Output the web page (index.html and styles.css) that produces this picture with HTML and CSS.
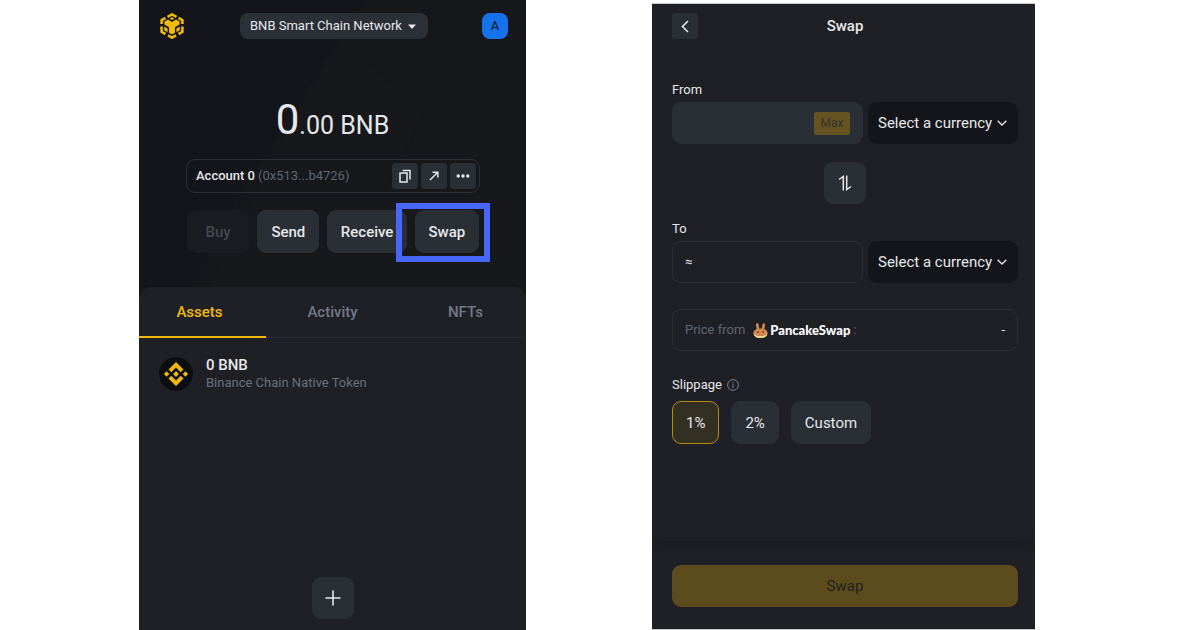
FILE: index.html
```html
<!DOCTYPE html>
<html lang="en">
<head>
    <meta charset="UTF-8">
    <meta name="viewport" content="width=device-width, initial-scale=1.0">
    <title>Wallet - Swap</title>
    <link rel="stylesheet" href="styles.css">
</head>
<body>
    <section class="panel wallet">
        <svg class="facets" viewBox="0 0 387 300" preserveAspectRatio="none" aria-hidden="true">
            <path d="M225 0 L387 0 L387 300 L45 300 L108 180 L200 40 Z" fill="#16171b"/>
            <path d="M200 40 L285 112 L245 190 L190 300 L62 300 L155 118 Z" fill="#17181c"/>
            <path d="M288 112 L387 112 L387 300 L190 300 Z" fill="#17181c"/>
        </svg>

        <header class="wallet-header">
            <svg class="logo" viewBox="0 0 24 26" aria-label="BNB Chain" role="img">
                <g fill="none" stroke="#f0b90b" stroke-width="2.6">
                    <path d="M7.5 3.8 L12 1.4 L16.5 3.8"/>
                    <path d="M18.6 5 L22.4 7.2 V11"/>
                    <path d="M22.4 13.6 V18.8 L18.6 21"/>
                    <path d="M16 22.4 L12 24.7 L8 22.4"/>
                    <path d="M5.4 21 L1.6 18.8 V13.6"/>
                    <path d="M1.6 11 V7.2 L5.4 5"/>
                </g>
                <g fill="#f0b90b">
                    <path d="M4.4 8.4 L8 6.5 L12 8.9 L16 6.5 L19.6 8.4 V11.4 L15 14.2 V19.8 L12 21.5 L9 19.8 V14.2 L4.4 11.4 Z"/>
                    <path d="M12 4.2 L14.4 5.6 L12 7 L9.6 5.6 Z"/>
                    <path d="M4.2 13.4 L7.6 15.4 V19.2 L4.2 17.2 Z"/>
                    <path d="M19.8 13.4 L16.4 15.4 V19.2 L19.8 17.2 Z"/>
                </g>
            </svg>
            <button class="network" type="button">
                BNB Smart Chain Network
                <svg width="8" height="5" viewBox="0 0 8 5" aria-hidden="true"><path d="M0 0.5 H8 L4 5 Z" fill="#e6e8ea"/></svg>
            </button>
            <button class="avatar" type="button">A</button>
        </header>

        <div class="balance"><span class="balance-big">0</span>.00 BNB</div>

        <div class="account">
            <span class="account-name">Account 0</span>
            <span class="account-address">(0x513...b4726)</span>
            <button class="icon-btn" type="button" aria-label="Copy address">
                <svg width="14" height="14" viewBox="0 0 14 14" fill="none" stroke="#e6e8ea" stroke-width="1.5" aria-hidden="true">
                    <rect x="2" y="4" width="7" height="9"/>
                    <path d="M4.5 1.5 H12 V10.5"/>
                </svg>
            </button>
            <button class="icon-btn" type="button" aria-label="Open in explorer">
                <svg width="12" height="12" viewBox="0 0 12 12" fill="none" stroke="#e6e8ea" stroke-width="1.5" aria-hidden="true">
                    <path d="M2 10 L9.5 2.5 M4.5 2.2 H9.8 V7.5"/>
                </svg>
            </button>
            <button class="icon-btn" type="button" aria-label="More">
                <svg width="14" height="4" viewBox="0 0 14 4" fill="#e6e8ea" aria-hidden="true">
                    <circle cx="2.2" cy="2" r="1.7"/><circle cx="7" cy="2" r="1.7"/><circle cx="11.8" cy="2" r="1.7"/>
                </svg>
            </button>
        </div>

        <div class="actions">
            <button class="action" type="button" disabled>Buy</button>
            <button class="action" type="button">Send</button>
            <button class="action action-wide" type="button">Receive</button>
            <div class="highlighted">
                <button class="action" type="button">Swap</button>
            </div>
        </div>

        <div class="sheet">
            <nav class="tabs">
                <button class="tab active" type="button">Assets</button>
                <button class="tab" type="button">Activity</button>
                <button class="tab" type="button">NFTs</button>
            </nav>
            <div class="token">
                <svg class="token-icon" viewBox="0 0 34 34" aria-hidden="true">
                    <circle cx="17" cy="17" r="17" fill="#0b0e11"/>
                    <g fill="#f0b90b">
                        <path d="M17 5 L24.5 12.5 L21.7 15.3 L17 10.6 L12.3 15.3 L9.5 12.5 Z"/>
                        <path d="M17 29 L24.5 21.5 L21.7 18.7 L17 23.4 L12.3 18.7 L9.5 21.5 Z"/>
                        <path d="M7.6 14.3 L10.3 17 L7.6 19.7 L4.9 17 Z"/>
                        <path d="M26.4 14.3 L29.1 17 L26.4 19.7 L23.7 17 Z"/>
                        <path d="M17 14.1 L19.9 17 L17 19.9 L14.1 17 Z"/>
                    </g>
                </svg>
                <div>
                    <div class="token-amount">0 BNB</div>
                    <div class="token-name">Binance Chain Native Token</div>
                </div>
            </div>
            <button class="square-btn add" type="button" aria-label="Add token">
                <svg width="16" height="16" viewBox="0 0 16 16" stroke="#e6e8ea" stroke-width="1.6" aria-hidden="true"><path d="M8 0.5 V15.5 M0.5 8 H15.5"/></svg>
            </button>
        </div>
    </section>

    <section class="panel swap">
        <form class="swap-form">
            <header class="swap-header">
                <button class="icon-btn" type="button" aria-label="Back">
                    <svg width="8" height="13" viewBox="0 0 8 13" fill="none" stroke="#e6e8ea" stroke-width="1.6" aria-hidden="true"><path d="M7 1 L1.5 6.5 L7 12"/></svg>
                </button>
                <h1>Swap</h1>
            </header>

            <label class="label" for="fromAmount">From</label>
            <div class="row">
                <div class="field">
                    <input type="text" id="fromAmount">
                    <button class="max" type="button" disabled>Max</button>
                </div>
                <div class="currency">
                    <select aria-label="From currency"><option>Select a currency</option></select>
                    <svg class="chevron" viewBox="0 0 10 6" aria-hidden="true"><path d="M0.7 0.7 L5 5 L9.3 0.7"/></svg>
                </div>
            </div>

            <button class="square-btn switch" type="button" aria-label="Switch direction">
                <svg width="14" height="16" viewBox="0 0 14 16" fill="none" stroke="#e6e8ea" stroke-width="1.5" aria-hidden="true">
                    <path d="M1 4.5 L5.3 1.5 V15.5"/>
                    <path d="M8.7 0.5 V14.5 L13 11.5"/>
                </svg>
            </button>

            <label class="label" for="toAmount">To</label>
            <div class="row">
                <div class="field field-outline">
                    <input type="text" id="toAmount" value="≈" readonly>
                </div>
                <div class="currency">
                    <select aria-label="To currency"><option>Select a currency</option></select>
                    <svg class="chevron" viewBox="0 0 10 6" aria-hidden="true"><path d="M0.7 0.7 L5 5 L9.3 0.7"/></svg>
                </div>
            </div>

            <div class="price">
                <span>Price from</span>
                <svg class="bunny" viewBox="0 0 15 15" aria-hidden="true">
                    <ellipse cx="7.5" cy="10.8" rx="7" ry="4" fill="#fedc90"/>
                    <path d="M3 1.2 C3.2 0 5.2 0 5.6 1.4 L6.2 5.4 H8.8 L9.4 1.4 C9.8 0 11.8 0 12 1.2 C12.2 2.8 11.4 4.6 11.4 6 C13.2 6.8 14.5 8 14.5 9.6 C14.5 12 11.4 13.4 7.5 13.4 S0.5 12 0.5 9.6 C0.5 8 1.8 6.8 3.6 6 C3.6 4.6 2.8 2.8 3 1.2 Z" fill="#d1884f"/>
                    <path d="M1.4 12 C3.4 13.6 11.6 13.6 13.6 12 C13 14 10.6 14.8 7.5 14.8 S2 14 1.4 12 Z" fill="#fedc90"/>
                    <ellipse cx="5" cy="9" rx="0.7" ry="1.1" fill="#633001"/>
                    <ellipse cx="10" cy="9" rx="0.7" ry="1.1" fill="#633001"/>
                </svg>
                <span class="brand">PancakeSwap</span>
                <span>:</span>
                <span class="price-value">-</span>
            </div>

            <div class="label slippage-label">
                Slippage
                <svg width="12" height="12" viewBox="0 0 12 12" fill="none" stroke="#76808f" aria-hidden="true">
                    <circle cx="6" cy="6" r="5.4"/><path d="M6 5.2 V9 M6 3 V4.2"/>
                </svg>
            </div>
            <div class="slippage">
                <button class="chip selected" type="button">1%</button>
                <button class="chip" type="button">2%</button>
                <button class="chip" type="button">Custom</button>
            </div>
        </form>
        <footer class="swap-footer">
            <button class="submit" type="button" disabled>Swap</button>
        </footer>
    </section>
</body>
</html>
```
FILE: styles.css
```css
* {
    box-sizing: border-box;
}
body {
    display: grid;
    grid-template-columns: 387fr 383fr;
    gap: 126px;
    min-height: 100vh;
    margin: 0;
    padding: 0 165px 0 139px;
    background: #fff;
    color: #e6e8ea;
    font-family: Roboto, "Liberation Sans", sans-serif;
    font-size: 13px;
    line-height: 18px;
}
button, input, select {
    margin: 0;
    padding: 0;
    border: none;
    color: inherit;
    font: inherit;
}
button {
    cursor: pointer;
}
svg {
    display: block;
    flex: none;
}
.panel {
    display: flex;
    flex-direction: column;
    overflow: hidden;
    background: #1f2025;
}

/* Wallet */
.wallet {
    position: relative;
    background: #14151a;
}
.facets {
    position: absolute;
    top: 0;
    left: 0;
    width: 100%;
    height: 300px;
}
.wallet > :not(.facets) {
    position: relative;
}
.wallet-header {
    display: grid;
    grid-template-columns: 1fr auto 1fr;
    align-items: center;
    padding: 13px 18px 0 21px;
}
.logo {
    width: 24px;
    height: 26px;
}
.network {
    display: flex;
    align-items: center;
    gap: 6px;
    height: 26px;
    padding: 0 12px 0 10px;
    border-radius: 8px;
    background: #2b2f36;
}
.avatar {
    justify-self: end;
    width: 26px;
    height: 26px;
    border-radius: 8px;
    background: #1672ec;
    color: #14151a;
    font-size: 13px;
}
.balance {
    margin-top: 57px;
    text-align: center;
    font-size: 25px;
    line-height: 48px;
}
.balance-big {
    font-size: 42px;
}
.account {
    display: flex;
    align-items: center;
    gap: 3px;
    height: 34px;
    margin: 9px 46px 0 47px;
    padding: 0 3px 0 9px;
    border: 1px solid #2b2f36;
    border-radius: 9px;
}
.account-name {
    font-weight: 500;
}
.account-address {
    flex: 1;
    color: #5e6673;
}
.icon-btn {
    display: flex;
    align-items: center;
    justify-content: center;
    width: 26px;
    height: 26px;
    border-radius: 4px;
    background: #2a2f35;
}
.actions {
    display: flex;
    gap: 8px;
    margin: 17px 47px 0 48px;
}
.action {
    flex: 62;
    width: 100%;
    height: 43px;
    border-radius: 9px;
    background: #2a2f35;
    font-size: 15px;
    font-weight: 500;
}
.action-wide {
    flex: 79;
}
.action:disabled {
    background: #1b1c21;
    color: #46484d;
}
.highlighted {
    position: relative;
    flex: 64;
}
.highlighted::after {
    content: "";
    position: absolute;
    inset: -7px -11px -9px -19px;
    border: 6px solid #4667f9;
}
.sheet {
    display: flex;
    flex: 1;
    flex-direction: column;
    margin-top: 34px;
    padding-bottom: 11px;
    overflow: hidden;
    border-radius: 12px 12px 0 0;
    background: #1f2025;
}
.tabs {
    display: flex;
    margin: 0 -6px;
    border-bottom: 1px solid #282a2f;
}
.tab {
    flex: 1;
    height: 51px;
    margin-bottom: -1px;
    border-bottom: 2px solid transparent;
    background: none;
    color: #707a8a;
    font-size: 15px;
    font-weight: 500;
}
.tab.active {
    border-color: #f0b90b;
    color: #f0b90b;
}
.token {
    display: flex;
    align-items: center;
    gap: 13px;
    padding: 18px 20px;
}
.token-icon {
    width: 34px;
    height: 34px;
}
.token-amount {
    font-size: 15px;
    font-weight: 500;
}
.token-name {
    color: #66707e;
}
.square-btn {
    display: flex;
    align-items: center;
    justify-content: center;
    width: 42px;
    height: 42px;
    border-radius: 9px;
    background: #2a2f35;
}
.add {
    margin: auto auto 0;
}

/* Swap */
.swap {
    margin: 3px 0 0;
    border-top: 1px solid #c9cacc;
    border-bottom: 1px solid #c9cacc;
}
.swap-form {
    flex: 1;
    padding: 9px 17px 0 20px;
    border-radius: 0 0 12px 12px;
    box-shadow: 0 4px 8px rgba(0, 0, 0, 0.1);
}
.swap-header {
    display: grid;
    grid-template-columns: 26px 1fr 26px;
    align-items: center;
    margin-bottom: 42px;
}
.swap-header h1 {
    margin: 0;
    text-align: center;
    font-size: 15px;
    font-weight: 500;
}
.label {
    display: block;
    margin-bottom: 3px;
}
.row {
    display: grid;
    grid-template-columns: 191fr 150fr;
    gap: 5px;
}
.field {
    display: flex;
    align-items: center;
    min-width: 0;
    height: 42px;
    padding: 0 12px;
    border: 1px solid #2a2f35;
    border-radius: 9px;
    background: #2a2f35;
}
.field-outline {
    background: none;
}
.field input {
    flex: 1;
    min-width: 0;
    background: none;
    outline: none;
}
.max {
    width: 36px;
    height: 23px;
    border-radius: 3px;
    background: #655322;
    color: #35332a;
    font-size: 12px;
}
.currency {
    position: relative;
}
.currency select {
    width: 100%;
    height: 42px;
    padding: 0 10px;
    appearance: none;
    border-radius: 9px;
    background: #14151a;
    font-size: 15px;
}
.chevron {
    position: absolute;
    top: 18px;
    right: 11px;
    width: 10px;
    height: 6px;
    fill: none;
    stroke: #e6e8ea;
    stroke-width: 1.3;
    pointer-events: none;
}
.switch {
    margin: 18px auto 16px;
}
.price {
    display: flex;
    align-items: center;
    height: 42px;
    margin: 26px 0 25px;
    padding: 0 12px;
    border: 1px solid #2a2d33;
    border-radius: 9px;
    color: #5e6673;
}
.bunny {
    width: 15px;
    height: 15px;
    margin: 0 2px 0 8px;
}
.brand {
    margin-right: 3px;
    color: #fff;
    font-family: Lato, sans-serif;
    font-weight: 900;
}
.price-value {
    margin-left: auto;
    color: #e6e8ea;
}
.slippage-label {
    display: flex;
    align-items: center;
    gap: 5px;
    margin-bottom: 7px;
}
.slippage {
    display: flex;
    gap: 12px;
}
.chip {
    height: 43px;
    padding: 0 13px;
    border: 1px solid #2a2f35;
    border-radius: 9px;
    background: #2a2f35;
    font-size: 15px;
}
.chip.selected {
    border-color: #b58c0e;
    background: #342f23;
}
.swap-footer {
    padding: 24px 17px 22px 20px;
}
.submit {
    width: 100%;
    height: 42px;
    border-radius: 9px;
    background: #5b4b1d;
    color: #24231f;
    font-size: 15px;
}
```
